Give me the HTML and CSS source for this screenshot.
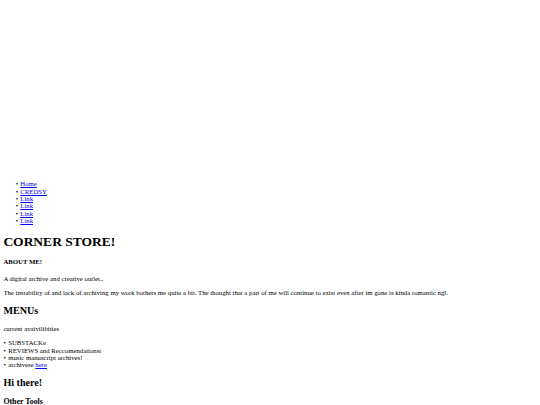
FILE: index.html
```html
<!DOCTYPE html>
<html lang="en">
<head>
<meta charset="utf-8">
<title>CORNER STORE!</title>
<link rel="stylesheet" href="styles.css">
</head>
<body>
<div class="banner"></div>
<ul class="nav">
  <li><a href="#">Home</a></li>
  <li><a href="#">CREDSY</a></li>
  <li><a href="#">Link</a></li>
  <li><a href="#">Link</a></li>
  <li><a href="#">Link</a></li>
  <li><a href="#">Link</a></li>
</ul>
<h1>CORNER STORE!</h1>
<h4>ABOUT ME!</h4>
<p>A digital archive and creative outlet..</p>
<p>The instability of and lack of archiving my work bothers me quite a bit. The thought that a part of me will continue to exist even after im gone is kinda romantic ngl.</p>
<h2>MENUs</h2>
<p>current avaivilibities</p>
<ul class="menu">
  <li>SUBSTACKe</li>
  <li>REVIEWS and Reccomendationst</li>
  <li>music manuscript archives!</li>
  <li>archivese <a href="#">here</a></li>
</ul>
<h2>Hi there!</h2>
<h3>Other Tools</h3>
</body>
</html>
```
FILE: styles.css
```css
html {
  font-size: 6.75px;
}
body {
  margin: 3.375px;
  font-family: "Liberation Serif", "Times New Roman", serif;
  font-size: 6.75px;
  line-height: 1.1;
  color: #000;
  background: #fff;
}
h1, h2, h3, h4 {
  line-height: 1.15;
}
a {
  color: #0000ee;
}
.banner {
  height: 170px;
}
.nav,
.menu {
  list-style: none;
}
.nav {
  padding-left: 16.9px;
}
.menu {
  padding-left: 4.8px;
}
.nav li::before,
.menu li::before {
  content: "\2022";
  display: inline-block;
  width: 4.6px;
  margin-left: -4.6px;
}
```
